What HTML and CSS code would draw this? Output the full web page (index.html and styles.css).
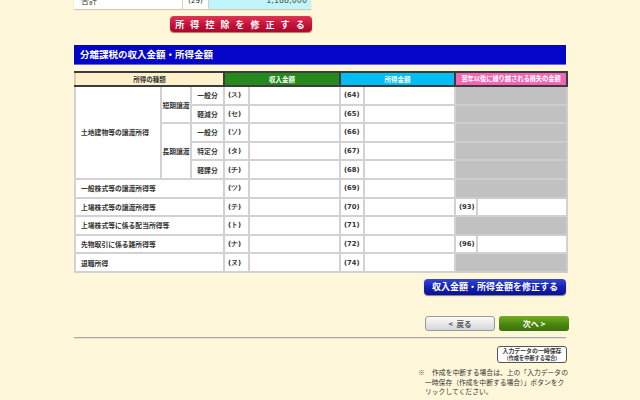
FILE: index.html
```html
<!DOCTYPE html>
<html lang="ja">
<head>
<meta charset="utf-8">
<link rel="stylesheet" href="styles.css">
</head>
<body>
<div class="page">
  <div class="top-frag">
    <div class="top-row">
      <div class="tc tc-label">合計</div>
      <div class="tc tc-code">(29)</div>
      <div class="tc tc-val">1,188,000</div>
    </div>
  </div>
  <div class="top-btn-wrap">
    <span class="btn btn-red">所 得 控 除 を 修 正 す る</span>
  </div>

  <div class="section-bar">分離課税の収入金額・所得金額</div>

  <table class="grid">
    <colgroup>
      <col style="width:86px"><col style="width:30px"><col style="width:33px">
      <col style="width:25px"><col style="width:91px">
      <col style="width:24px"><col style="width:91px">
      <col style="width:22px"><col style="width:90px">
    </colgroup>
    <tr class="head">
      <th colspan="3" class="h-kind">所得の種類</th>
      <th colspan="2" class="h-green">収入金額</th>
      <th colspan="2" class="h-cyan">所得金額</th>
      <th colspan="2" class="h-pink">翌年以後に繰り越される損失の金額</th>
    </tr>
    <tr>
      <td rowspan="5" class="lbl">土地建物等の譲渡所得</td>
      <td rowspan="2" class="ctr">短期譲渡</td>
      <td class="ctr">一般分</td>
      <td class="code">(ス)</td><td class="val"></td>
      <td class="code">(64)</td><td class="val"></td>
      <td colspan="2" class="gray"></td>
    </tr>
    <tr>
      <td class="ctr">軽減分</td>
      <td class="code">(セ)</td><td class="val"></td>
      <td class="code">(65)</td><td class="val"></td>
      <td colspan="2" class="gray"></td>
    </tr>
    <tr>
      <td rowspan="3" class="ctr">長期譲渡</td>
      <td class="ctr">一般分</td>
      <td class="code">(ソ)</td><td class="val"></td>
      <td class="code">(66)</td><td class="val"></td>
      <td colspan="2" class="gray"></td>
    </tr>
    <tr>
      <td class="ctr">特定分</td>
      <td class="code">(タ)</td><td class="val"></td>
      <td class="code">(67)</td><td class="val"></td>
      <td colspan="2" class="gray"></td>
    </tr>
    <tr>
      <td class="ctr">軽課分</td>
      <td class="code">(チ)</td><td class="val"></td>
      <td class="code">(68)</td><td class="val"></td>
      <td colspan="2" class="gray"></td>
    </tr>
    <tr>
      <td colspan="3" class="lbl">一般株式等の譲渡所得等</td>
      <td class="code">(ツ)</td><td class="val"></td>
      <td class="code">(69)</td><td class="val"></td>
      <td colspan="2" class="gray"></td>
    </tr>
    <tr>
      <td colspan="3" class="lbl">上場株式等の譲渡所得等</td>
      <td class="code">(テ)</td><td class="val"></td>
      <td class="code">(70)</td><td class="val"></td>
      <td class="code">(93)</td><td class="val"></td>
    </tr>
    <tr>
      <td colspan="3" class="lbl">上場株式等に係る配当所得等</td>
      <td class="code">(ト)</td><td class="val"></td>
      <td class="code">(71)</td><td class="val"></td>
      <td colspan="2" class="gray"></td>
    </tr>
    <tr>
      <td colspan="3" class="lbl">先物取引に係る雑所得等</td>
      <td class="code">(ナ)</td><td class="val"></td>
      <td class="code">(72)</td><td class="val"></td>
      <td class="code">(96)</td><td class="val"></td>
    </tr>
    <tr>
      <td colspan="3" class="lbl">退職所得</td>
      <td class="code">(ヌ)</td><td class="val"></td>
      <td class="code">(74)</td><td class="val"></td>
      <td colspan="2" class="gray"></td>
    </tr>
  </table>

  <div class="right-row mod-row">
    <span class="btn btn-blue">収入金額・所得金額を修正する</span>
  </div>

  <div class="right-row nav-row">
    <span class="btn btn-gray">&lt;&nbsp;&nbsp;戻る</span>
    <span class="btn btn-green">次へ &gt;</span>
  </div>

  <div class="rule"></div>

  <div class="right-row save-row">
    <span class="btn-save"><span class="s1">入力データの一時保存</span><span class="s2">(作成を中断する場合)</span></span>
  </div>

  <div class="right-row note-row">
    <p class="note"><span class="mark">※</span>作成を中断する場合は、上の「入力データの一時保存（作成を中断する場合）」ボタンをクリックしてください。</p>
  </div>
</div>
</body>
</html>
```

FILE: styles.css
```css
html, body {
  margin: 0;
  padding: 0;
  background: #fff7da;
}
body {
  font-family: "Noto Sans CJK JP", "DejaVu Sans", sans-serif;
  color: #222;
  width: 640px;
  height: 400px;
  overflow: hidden;
}
.page {
  width: 492px;
  margin: 0 auto;
}

/* top fragment */
.top-frag {
  width: 237px;
  height: 9px;
  overflow: hidden;
  display: flex;
  align-items: flex-end;
  box-shadow: 0 1px 1px rgba(0,0,0,0.18);
}
.top-row {
  display: flex;
  width: 237px;
  height: 14px;
  background: #fff;
  font-size: 8px;
  line-height: 8px;
}
.tc {
  box-sizing: border-box;
  border-right: 1px solid #cfcfcf;
  padding-top: 2px;
}
.tc-label { width: 109px; padding-left: 7px; color: #333; }
.tc-code { width: 26px; text-align: center; font-family: "DejaVu Sans", sans-serif; font-size: 7px; }
.tc-val { flex: 1; background: #bff5fb; text-align: right; padding-right: 4px; border-right: none; font-family: "DejaVu Sans", sans-serif; font-size: 8px; color: #555; }

.top-btn-wrap {
  width: 238px;
  display: flex;
  justify-content: flex-end;
  margin-top: 7px;
}

.btn {
  display: inline-flex;
  align-items: center;
  justify-content: center;
  box-sizing: border-box;
  font-weight: bold;
  white-space: nowrap;
}
.btn-red {
  width: 142px;
  height: 16px;
  border-radius: 4px;
  background: linear-gradient(#e33454, #c3123a 55%, #a80a2a);
  color: #fff;
  font-size: 9px;
  letter-spacing: 2px;
  box-shadow: 0 1px 1px rgba(80,0,0,0.5);
}

.section-bar {
  margin-top: 13px;
  height: 19px;
  background: #0505c8;
  color: #fff;
  font-size: 9.5px;
  font-weight: bold;
  line-height: 19px;
  padding-left: 6px;
  box-shadow: 0 1px 0 #6a6ae0;
}

/* main table */
.grid {
  margin-top: 7px;
  width: 492px;
  table-layout: fixed;
  border-collapse: collapse;
  font-size: 6.8px;
}
.grid td, .grid th {
  border: 2px solid #d2d2d2;
  padding: 0;
  height: 16.6px;
  line-height: 10px;
  font-weight: bold;
  color: #333;
  white-space: nowrap;
  overflow: visible;
}
.grid td {
  background: #fff;
}
.grid .head th {
  height: 12px;
  border: 2px solid #3c3c3c;
  font-size: 6.5px;
  color: #fff;
}
.grid .head .h-kind {
  background: #fcf1cb;
  color: #333;
  border-left-color: #d8cfa8;
}
.h-green { background: #25891d; }
.h-cyan { background: #03bdf4; }
.grid .head .h-pink { background: #f264b4; font-size: 6.3px; letter-spacing: -0.1px; }

.lbl { padding-left: 5px !important; text-align: left; }
.ctr { text-align: center; }
.code {
  text-align: left;
  padding-left: 3px !important;
  font-family: "DejaVu Sans", sans-serif;
  font-size: 6.8px;
  color: #3a2a20;
}
.grid td.gray {
  background: #c1c1c1;
  border-color: #cdcdcd;
}

/* buttons below */
.right-row {
  display: flex;
  justify-content: flex-end;
}
.mod-row { margin-top: 6px; }
.btn-blue {
  width: 142px;
  height: 16px;
  border-radius: 4px;
  background: linear-gradient(#3446d8, #1420b0 55%, #0a1290);
  color: #fff;
  font-size: 9px;
  box-shadow: 0 1px 1px rgba(0,0,40,0.5);
}
.nav-row {
  margin-top: 21px;
  margin-right: -3px;
  gap: 4px;
}
.btn-gray {
  width: 70px;
  height: 15px;
  border-radius: 3px;
  border: 1px solid #9a9a9a;
  background: linear-gradient(#fbfbfb, #d6d6d6);
  color: #555;
  font-size: 7.5px;
}
.btn-green {
  width: 70px;
  height: 15px;
  border-radius: 3px;
  background: linear-gradient(#74ae22, #4a8610 55%, #3c720a);
  color: #fff;
  font-size: 8px;
}
.rule {
  margin-top: 6px;
  border-top: 1px solid #a8a8a8;
  border-bottom: 1px solid #e6e0c8;
}
.save-row { margin-top: 7px; margin-right: -1px; }
.btn-save {
  width: 70px;
  height: 17px;
  box-sizing: border-box;
  border: 1px solid #555;
  border-radius: 3px;
  background: #fff;
  display: flex;
  flex-direction: column;
  align-items: center;
  justify-content: center;
  font-weight: bold;
  color: #333;
  white-space: nowrap;
  overflow: hidden;
}
.btn-save .s1 { display: block; font-size: 5.9px; line-height: 7px; height: 7px; }
.btn-save .s2 { display: block; font-size: 5.2px; line-height: 7px; height: 7px; }
.note-row { margin-top: 5px; margin-right: -4px; }
.note {
  margin: 0;
  width: 145px;
  font-size: 6.8px;
  line-height: 9.6px;
  color: #333;
  text-indent: -7px;
}
.note .mark {
  display: inline-block;
  width: 14px;
  text-indent: 0;
  color: #666;
}
```
